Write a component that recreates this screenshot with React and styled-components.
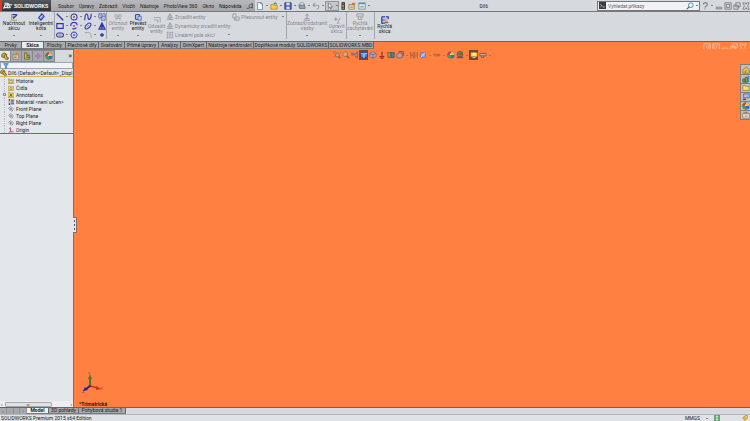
import { useState } from "react";
import styled, { createGlobalStyle, css } from "styled-components";

const GlobalStyle = createGlobalStyle`
  * {
    box-sizing: border-box;
  }

  body {
    margin: 0;
    background: #d6d9de;
    font-family: Roboto, "Open Sans", sans-serif;
    font-size: 5px;
    line-height: 6px;
    color: #1c1e22;
  }

  button,
  input {
    margin: 0;
    padding: 0;
    border: none;
    background: none;
    color: inherit;
    font: inherit;
  }
`;

const C = { blue: "#2a35b0", gray: "#85888d", orange: "#ff8040" };

const ICONS = {
  sketch: (
    <>
      <path d="M2 1v8M1 9h8" stroke="#c89a30" strokeWidth="1.2" />
      <path d="M3 2h5M3 5h3M4 7l5-5" stroke={C.blue} strokeWidth="1.5" />
    </>
  ),
  dimension: (
    <>
      <path d="M2 6l4-5 3 3-4 5z" fill="#7d9ae0" stroke={C.blue} strokeWidth="1.3" />
      <path d="M4 6l3-3" stroke="#fff" />
    </>
  ),
  line: <path d="M1 1l8 8" stroke={C.blue} strokeWidth="1.7" />,
  circle: (
    <>
      <circle cx="5" cy="5" r="3.8" stroke={C.blue} strokeWidth="1.3" />
      <circle cx="5" cy="5" r="1.3" fill="#c04860" />
    </>
  ),
  spline: <path d="M1 9c0-10 4-9 4-4s4 4 4-4" stroke={C.blue} strokeWidth="1.4" />,
  hatch: (
    <>
      <path d="M1 1h4v5H1zM4 4h5v5H4zM6 1h3v3" stroke="#5963bd" strokeWidth="1.1" />
      <path d="M1 8l2-2M2 2l6 6" stroke="#8a91cc" />
    </>
  ),
  rect: (
    <>
      <path d="M1 2h8v6H1z" stroke={C.blue} strokeWidth="1.4" />
      <path d="M1 8h1" stroke="#d04040" strokeWidth="2" />
    </>
  ),
  arc: (
    <>
      <path d="M1 5a4 4 0 018-1M8 7a4 4 0 01-5 1" stroke={C.blue} strokeWidth="1.4" />
      <circle cx="5" cy="5" r="1.3" fill="#c04860" />
    </>
  ),
  ellipse: (
    <>
      <ellipse cx="5" cy="5" rx="4.5" ry="2.4" transform="rotate(-45 5 5)" stroke={C.blue} strokeWidth="1.3" />
      <path d="M4 6l2-2" stroke="#c04860" />
    </>
  ),
  text: <path d="M5 1L1 9h8zM5 3v6M3 6h4" stroke={C.blue} strokeWidth="1.3" fill="#8a91cc" />,
  slot: (
    <>
      <rect x="0.7" y="2.5" width="8.6" height="5" rx="2.5" stroke={C.blue} strokeWidth="1.3" />
      <path d="M3 5h4" stroke="#c04860" />
    </>
  ),
  polygon: (
    <>
      <path d="M3 1.5h4L9 5 7 8.5H3L1 5z" stroke={C.blue} strokeWidth="1.2" />
      <circle cx="5" cy="5" r="1.2" fill="#5963bd" />
    </>
  ),
  fillet: <path d="M1 2h4c3 0 4 2 4 4v3" stroke="#a0a3b0" strokeWidth="1.2" />,
  point: <path d="M5 2.5v5M2.5 5h5" stroke={C.blue} strokeWidth="1.6" />,
  trim: <path d="M1 2h3v3H1zM6 2h3v3H6zM2 9l5-7M8 9L3 2M1 7h8" stroke="#a6a9ae" />,
  convert: (
    <>
      <path d="M2 2h5v6H2z" fill="#c9d2ef" stroke={C.blue} strokeWidth="1.2" />
      <path d="M5 4h4v5H5z" fill="#c9d2ef" stroke="#4a55b5" />
    </>
  ),
  offset: <path d="M1 2h8v6M1 5h5v4" stroke="#a3a6ab" strokeWidth="1.2" />,
  mirror: <path d="M5 1L2 6h6zM1 8h8M5 1v8" stroke="#999ca1" strokeWidth="1.1" />,
  pattern: <path d="M1 2h8M1 5h8M1 8h8" stroke="#999ca1" strokeWidth="2" strokeDasharray="2 1" />,
  move: <path d="M1 1h4v5H1zM5 5h4v4H5zM3 6v3h2" stroke="#999ca1" strokeWidth="1.1" />,
  relations: <path d="M1 9h8M5 7V3M2 7h6M3 4l2-3 2 3" stroke="#999ca1" strokeWidth="1.2" />,
  repair: <path d="M1 4h5M3.5 1.5v5M6 8l3-6M5 9h3" stroke="#999ca1" strokeWidth="1.1" />,
  snaps: <path d="M1 1h8v3H1zM3 4v4h5M5 6h4" stroke="#999ca1" strokeWidth="1.1" />,
  rapid: (
    <>
      <path d="M1 1h4M1 1v8h4M1 5h4M6 1h3v3" stroke={C.blue} strokeWidth="1.5" />
      <path d="M5 3h3v3H5z" fill="#e8b43a" />
      <path d="M5 7h4v2H5z" fill="#a4553c" />
    </>
  ),
  pin: <path d="M1 8h3M4 4l4-2v5H4zM8 2v6" stroke="#55585d" strokeWidth="1.2" />,
  newDoc: <path d="M2 .5h4l2 2v7H2zM6 .5v2h2" fill="#fff" stroke="#68778f" />,
  open: (
    <>
      <path d="M1 3h3l1 1h4v5H1z" fill="#f3cd4b" stroke="#b38a26" />
      <path d="M5 3c1-3 3-2 3 0" stroke="#3d8a40" strokeWidth="1.3" />
    </>
  ),
  save: (
    <>
      <path d="M1 1h8v8H1z" fill="#4d64bd" stroke="#29377f" />
      <path d="M3 1h4v3H3zM3 6h4v3H3z" fill="#dfe5f4" />
    </>
  ),
  print: (
    <>
      <path d="M3 1h4l1 3H2z" fill="#fff" stroke="#7a7d84" />
      <path d="M1 4h7l1 4H2z" fill="#9aa4b8" stroke="#5f6a80" />
    </>
  ),
  undo: <path d="M1 4l3-3M1 4l3 2M1 4h5c4 0 3 4 0 5" stroke="#9a9da3" strokeWidth="1.3" />,
  cursor: <path d="M3 1v7l2-2 1 3 1-1-1-2h2z" fill="#f7f7f7" stroke="#585b60" strokeWidth=".8" />,
  traffic: (
    <>
      <rect x="3" y="0" width="4.5" height="10" rx="1" fill="#46443f" />
      <circle cx="5.2" cy="2" r="1.2" fill="#e04434" />
      <circle cx="5.2" cy="5" r="1.1" fill="#c7a13c" />
      <circle cx="5.2" cy="8" r="1.2" fill="#47b24c" />
    </>
  ),
  props: (
    <>
      <path d="M1 3h7v6H1z" fill="#f4ead2" stroke="#97793c" />
      <path d="M5 1h4v3H5z" fill="#d2783c" />
      <path d="M2 5h5M2 7h5" stroke="#8a8d93" />
    </>
  ),
  panel: (
    <>
      <path d="M1 1h8v8H1z" fill="#dbe6ea" stroke="#718a96" />
      <path d="M1 2h8" stroke="#5d8fa5" strokeWidth="1.5" />
      <path d="M3 6h4" stroke="#7fa56e" strokeWidth="1.5" />
    </>
  ),
  search: (
    <>
      <circle cx="6" cy="4" r="3" fill="#e5f2fa" stroke="#5c94bc" strokeWidth="1.2" />
      <path d="M4 6L1 9" stroke="#6a5a4d" strokeWidth="1.5" />
    </>
  ),
  prompt: (
    <>
      <path d="M0 0h10v10H0z" fill="#383a40" />
      <path d="M2 3l2 2-2 2M5 7h3" stroke="#fff" />
    </>
  ),
  help: <path d="M3 3c0-3 5-3 5 0 0 2-3 2-3 4M5 8v1.5" stroke="#7c7f85" strokeWidth="1.4" />,
  minimize: <path d="M1.5 6.5h7v2h-7z" stroke="currentColor" strokeWidth="1.1" />,
  maximize: <path d="M1 1h8v8H1zM3 3h4v4H3z" stroke="currentColor" strokeWidth="1.1" />,
  restore: <path d="M3.5 1h5.5v5H3.5zM1 4h5.5v5H1z" stroke="currentColor" strokeWidth="1.1" />,
  close: <path d="M1 1h3l1 2 1-2h3L7 5l2 4H6L5 7 4 9H1l2-4z" stroke="currentColor" />,
  dockLeft: <path d="M1 1h8v8H1zM6 3L4 5l2 2M7.5 3v4" stroke="currentColor" strokeWidth="1.1" />,
  dockRight: <path d="M1 1h8v8H1zM4 3l2 2-2 2M2.5 3v4" stroke="currentColor" strokeWidth="1.1" />,
  part: (
    <>
      <path d="M1 3l3-2 3 2v3l2 1v2L6 9 4 7 1 6z" fill="#e4b62e" stroke="#665420" strokeWidth="1.1" />
      <path d="M4 4l3-1M4 4v3" stroke="#665420" />
    </>
  ),
  property: (
    <>
      <path d="M1 3h7v6H1z" fill="#e8e0c8" stroke="#8b7a55" />
      <path d="M5 1h4v3H5z" fill="#d28646" />
      <path d="M2 5h4M2 7h4" stroke="#67696f" />
    </>
  ),
  config: (
    <>
      <path d="M2 1h3v3h3v5H2z" fill="#d4c152" stroke="#615d38" />
      <path d="M4 5h4M4 7h4" stroke="#615d38" />
    </>
  ),
  target: <path d="M5 .5v9M.5 5h9M5 2.5L7.5 5 5 7.5 2.5 5z" fill="#d5a0db" stroke="#a568b0" />,
  ball: (
    <>
      <circle cx="5" cy="5" r="4.5" fill="#3c66c8" />
      <path d="M5 5V.5A4.5 4.5 0 019.5 5z" fill="#e5c332" />
      <path d="M5 5H.5A4.5 4.5 0 015 .5z" fill="#d43b35" />
      <path d="M5 5v4.5A4.5 4.5 0 01.5 5z" fill="#45a14c" />
      <circle cx="4.5" cy="4" r="1" fill="#fff" />
    </>
  ),
  filter: <path d="M1 1h8L6 5v4H4V5z" fill="#6fa6df" stroke="#3970ad" />,
  folder: (
    <>
      <path d="M0 2h4l1 1h5v6H0z" fill="#efd46a" stroke="#9c8740" />
      <path d="M3 4h4v4H3z" fill="#fff" stroke="#5c7850" />
    </>
  ),
  sensor: (
    <>
      <path d="M0 2h4l1 1h5v6H0z" fill="#efd46a" stroke="#9c8740" />
      <circle cx="5" cy="6" r="1.8" fill="#f8eeba" stroke="#8a6c28" />
    </>
  ),
  annotation: (
    <>
      <path d="M0 1h4l1 1h5v7H0z" fill="#f6de55" stroke="#9c8740" />
      <path d="M3 8l2-5 2 5M4 6h2" stroke="#4b471f" strokeWidth="1.2" />
    </>
  ),
  material: (
    <>
      <path d="M1 0h3v3H1z" fill="#c5342d" />
      <path d="M1 4h3v2H1z" fill="#3f9a46" />
      <path d="M1 7h3v3H1z" fill="#3450b0" />
      <path d="M5 2h5M5 5h5M5 8h5" stroke="#33363c" strokeWidth="1.5" />
    </>
  ),
  plane: <path d="M1 4l4-3 4 4-3 4zM2 2l6 6M3 7l4-4" stroke="#71757c" />,
  origin: (
    <>
      <path d="M4 1v7h5" stroke="#b93a3a" strokeWidth="1.4" />
      <path d="M4 1l-2 2M4 8l-3 1" stroke="#4b4e95" />
    </>
  ),
  zoomFit: (
    <>
      <path d="M1 1h3M1 1v3M9 1v2M1 7h2" stroke="#a8745f" strokeWidth="1.2" />
      <circle cx="5.5" cy="5" r="2.5" fill="#d79a7e" stroke="#8f6656" />
      <path d="M7 7l2 2" stroke="#735447" strokeWidth="1.6" />
    </>
  ),
  zoomArea: (
    <>
      <circle cx="4" cy="4" r="3" fill="#dba68c" stroke="#946a5d" />
      <path d="M6 6l3 3" stroke="#735447" strokeWidth="1.5" />
    </>
  ),
  previous: <path d="M1 2l3 3 4-4v8M1 2v3h3M5 6l3 3" stroke="#7b6d78" strokeWidth="1.4" />,
  section: (
    <>
      <path d="M1 3l5-2 3 2v4L5 9 1 8z" fill="#4a91e8" stroke="#173f91" />
      <path d="M1 3l4 1 4-1M5 4v5" stroke="#b8dcff" />
    </>
  ),
  cube: (
    <>
      <path d="M1 3l4-2 4 2v4L5 9 1 7z" fill="#b3a7b8" stroke="#786d88" />
      <path d="M1 3l4 2 4-2M5 5v4" stroke="#655d7b" />
    </>
  ),
  styleCube: (
    <>
      <path d="M1 4l4-2 3 2v4L4 9 1 8z" fill="#bb9c96" stroke="#7a5d63" />
      <path d="M3 1h6v5" stroke="#a63c30" strokeWidth="1.4" />
    </>
  ),
  appearance: (
    <>
      <path d="M2 2h6v6H2z" fill="#9cacdb" stroke="#6a6f9e" />
      <path d="M2 8l6-6" stroke="#e5ddea" />
    </>
  ),
  normal: <path d="M5 1v6M2 7h6M3 9h4" stroke="#a62c26" strokeWidth="1.5" />,
  display: (
    <>
      <path d="M1 2h4v6H1z" fill="#8a9d5c" stroke="#665d3a" />
      <path d="M5 2h4v6H5z" fill="#577aa8" stroke="#444d68" />
    </>
  ),
  hide: <path d="M1 1v8M4 1v8M6 1v8M9 1v8M1 5h3" stroke="#ae5c3c" strokeWidth="1.2" />,
  glasses: <path d="M1 6c1-3 3-3 4 0 1-3 3-3 4 0M1 6h2M6 6h2" stroke="#a5694e" strokeWidth="1.4" />,
  scene: (
    <>
      <circle cx="5" cy="4" r="3.5" fill="#62924d" stroke="#5d5938" />
      <path d="M1 8h8" stroke="#72564d" strokeWidth="2" />
      <path d="M4 2h3v3H4z" fill="#b4464a" />
    </>
  ),
  lamp: (
    <>
      <path d="M1 2h8v5H1z" fill="#efd12f" />
      <circle cx="5" cy="4" r="2" fill="#fff58c" />
      <path d="M3 8h4" stroke="#c6b89a" strokeWidth="1.5" />
    </>
  ),
  camera: <path d="M1 3h8v3H1zM3 6v2h3V6" fill="#c9a991" stroke="#6b554c" />,
  home: <path d="M1 5l4-4 4 4v4H1zM4 9V6h2" fill="#e9c34d" stroke="#947338" />,
  library: (
    <>
      <path d="M1 5h3v4H1zM4 3h3v6H4z" fill="#6aa564" stroke="#35673c" />
      <path d="M7 1h2v8H7z" fill="#5c80b8" />
    </>
  ),
  explorer: <path d="M1 2h3l1 1h4v5H1z" fill="#f3dc79" stroke="#a28739" />,
  palette: (
    <>
      <path d="M2 1h7v5H2z" fill="#aebbd6" stroke="#54658f" />
      <path d="M1 7h4v2H1z" fill="#3454a8" />
    </>
  ),
  form: (
    <>
      <path d="M1 3h8v6H1z" fill="#eee9df" stroke="#807564" />
      <path d="M2 1h5v2H2z" fill="#a3866b" />
      <path d="M3 5h4M3 7h4" stroke="#9b9389" />
    </>
  ),
  unit: (
    <>
      <path d="M1 0h8v10H1z" fill="#68a875" stroke="#417650" />
      <path d="M5 2v6M3 2h4M3 8h4" stroke="#fff" strokeWidth="1.3" />
    </>
  ),
  tag: (
    <>
      <path d="M1 5l4-4h4v4L5 9z" fill="#e8b52c" stroke="#a77e28" />
      <circle cx="7" cy="3" r="1" fill="#fff" />
    </>
  ),
};

const Icon = ({ name, size = 8 }) => (
  <Svg $size={size} viewBox="0 0 10 10" fill="none" aria-hidden="true">
    {ICONS[name]}
  </Svg>
);

const IconButton = ({ name, label, menu, ...rest }) => (
  <Tool type="button" aria-label={label} $menu={menu} {...rest}>
    <Icon name={name} />
    {menu && <Arrow />}
  </Tool>
);

const Command = ({ icon, width, lines, menu, disabled, low }) => (
  <CommandButton type="button" disabled={disabled} $width={width} $low={low}>
    <Icon name={icon} />
    <span>
      {lines[0]}
      <br />
      {lines[1]}
    </span>
    {menu && <Arrow />}
  </CommandButton>
);

const menus = ["Soubor", "Úpravy", "Zobrazit", "Vložit", "Nástroje", "PhotoView 360", "Okno", "Nápověda"];

const quickTools = [
  { name: "newDoc", label: "Nový", menu: true },
  { name: "open", label: "Otevřít", menu: true },
  { name: "save", label: "Uložit", menu: true },
  { name: "print", label: "Tisk", menu: true },
  { name: "undo", label: "Zpět", menu: true },
  { name: "cursor", label: "Vybrat", menu: true, $pressed: true },
  { name: "traffic", label: "Znovu sestavit" },
  { name: "props", label: "Vlastnosti souboru" },
  { name: "panel", label: "Možnosti", menu: true },
];

const sketchTools = [
  ["line", true], ["circle", true], ["spline", true], ["hatch", false],
  ["rect", true], ["arc", true], ["ellipse", true], ["text", false],
  ["slot", true], ["polygon", false], ["fillet", true], ["point", false],
];

const tabs = [
  ["Prvky", 22],
  ["Skica", 22],
  ["Plochy", 22],
  ["Plechové díly", 33],
  ["Svařování", 26],
  ["Přímé úpravy", 34],
  ["Analýzy", 22],
  ["DimXpert", 26],
  ["Nástroje rendrování", 47],
  ["Doplňkové moduly SOLIDWORKS", 75],
  ["SOLIDWORKS MBD", 45],
];

const tree = [
  ["folder", "Historie"],
  ["sensor", "Čidla"],
  ["annotation", "Annotations"],
  ["material", "Materiál <není určen>"],
  ["plane", "Front Plane"],
  ["plane", "Top Plane"],
  ["plane", "Right Plane"],
  ["origin", "Origin"],
];

const viewTools = [
  ["zoomFit"], ["zoomArea"], ["previous"], ["section", false, true], ["cube"],
  ["normal"], ["display"], ["styleCube", true], ["hide"], ["appearance", true],
  ["glasses", true], ["ball"], ["scene", true], ["lamp", false, true], ["camera", true],
];

const App = () => {
  const [activeTab, setActiveTab] = useState("Skica");
  const [sheet, setSheet] = useState("Model");

  return (
    <Page>
      <GlobalStyle />
      <TitleBar>
        <Brand>
          <Logo viewBox="0 0 14 10" fill="none" aria-hidden="true">
            <path d="M3 2h4c2 0 1 2-1 2M2 9l2-5c4 0 4 4-1 4M13 4H9c-2 2 3 2 1 4H6" stroke="#fff" strokeWidth="1.3" />
          </Logo>
          SOLIDWORKS
        </Brand>
        <Menu>
          {menus.map((item) => (
            <button type="button" key={item}>{item}</button>
          ))}
          <IconButton name="pin" label="Připnout" />
        </Menu>
        <QuickTools>
          {quickTools.map((tool) => (
            <IconButton key={tool.name} {...tool} />
          ))}
        </QuickTools>
        <DocumentName>Díl6</DocumentName>
        <Search>
          <Icon name="prompt" size={7} />
          <input type="search" aria-label="Vyhledat příkazy" placeholder="Vyhledat příkazy" />
          <IconButton name="search" label="Vyhledat" menu />
        </Search>
        <WindowButtons>
          <IconButton name="help" label="Nápověda" menu />
          <IconButton name="minimize" label="Minimalizovat" />
          <IconButton name="maximize" label="Maximalizovat" />
          <IconButton name="restore" label="Obnovit" />
          <IconButton name="close" label="Zavřít" />
        </WindowButtons>
      </TitleBar>

      <Ribbon>
        <Group>
          <Command icon="sketch" width={28} lines={["Načrtnout", "skicu"]} menu />
          <Command icon="dimension" width={26} lines={["Inteligentní", "kóta"]} menu />
        </Group>
        <SketchGrid>
          {sketchTools.map(([name, menu]) => (
            <IconButton key={name} name={name} label={name} menu={menu} />
          ))}
        </SketchGrid>
        <Group>
          <Command icon="trim" width={22} lines={["Oříznout", "entity"]} menu disabled />
          <Command icon="convert" width={18} lines={["Převést", "entity"]} menu />
          <Command icon="offset" width={19} lines={["Odsadit", "entity"]} disabled low />
          <Stack>
            <RowButton type="button" disabled><Icon name="mirror" />Zrcadlit entity</RowButton>
            <RowButton type="button" disabled><Icon name="mirror" />Dynamicky zrcadlit entity</RowButton>
            <RowButton type="button" disabled $spread><Icon name="pattern" /><span>Lineární pole skici</span><Arrow /></RowButton>
          </Stack>
          <Stack>
            <RowButton type="button" disabled><Icon name="move" /><span>Přesunout entity</span><Arrow /></RowButton>
          </Stack>
        </Group>
        <Group>
          <Command icon="relations" width={41} lines={["Zobrazit/odstranit", "vazby"]} menu disabled />
          <Command icon="repair" width={18} lines={["Opravit", "skicu"]} disabled low />
        </Group>
        <Group>
          <Command icon="snaps" width={27} lines={["Rychlá", "zachytávání"]} menu disabled />
        </Group>
        <Command icon="rapid" width={20} lines={["Rychlá", "skica"]} low />
      </Ribbon>

      <TabRow>
        <TabList role="tablist">
          {tabs.map(([name, width]) => (
            <Tab
              type="button"
              role="tab"
              key={name}
              aria-selected={name === activeTab}
              $active={name === activeTab}
              $width={width}
              onClick={() => setActiveTab(name)}
            >
              {name}
            </Tab>
          ))}
        </TabList>
        <ViewportButtons>
          <IconButton name="dockLeft" label="Ukotvit vlevo" />
          <IconButton name="dockRight" label="Ukotvit vpravo" />
          <IconButton name="minimize" label="Minimalizovat okno" />
          <IconButton name="restore" label="Obnovit okno" />
          <IconButton name="close" label="Zavřít okno" />
        </ViewportButtons>
      </TabRow>

      <Workspace>
        <Sidebar>
          <ManagerTabs>
            {["part", "property", "config", "target", "ball"].map((name, index) => (
              <ManagerTab type="button" key={name} aria-label={name} $active={index === 0}>
                <Icon name={name} />
              </ManagerTab>
            ))}
            <More type="button">»</More>
          </ManagerTabs>
          <Filter>
            <Icon name="filter" size={6} />
            <input type="text" aria-label="Filtr" />
          </Filter>
          <TreeRoot>
            <Icon name="part" size={7} />
            <span>Díl6 (Default&lt;&lt;Default&gt;_Displ</span>
          </TreeRoot>
          <Tree>
            {tree.map(([icon, label]) => (
              <TreeItem key={label}>
                <Branch>{label === "Annotations" && <Expander />}</Branch>
                <Icon name={icon} size={6} />
                <span>{label}</span>
              </TreeItem>
            ))}
          </Tree>
          <ScrollBar>
            <span>‹</span>
            <Thumb>ııı</Thumb>
            <span>›</span>
          </ScrollBar>
        </Sidebar>

        <Viewport>
          <Splitter type="button" aria-label="Sbalit panel">
            <i />
            <i />
            <i />
          </Splitter>
          <ViewBar>
            {viewTools.map(([name, menu, pressed]) => (
              <IconButton key={name} name={name} label={name} menu={menu} $dark={pressed} />
            ))}
          </ViewBar>
          <TaskPane>
            {["home", "library", "explorer", "palette", "ball", "form"].map((name) => (
              <TaskButton type="button" key={name} aria-label={name}>
                <Icon name={name} />
              </TaskButton>
            ))}
          </TaskPane>
          <Orientation>
            <Triad viewBox="0 0 26 26" fill="none">
              <path d="M11 15V6" stroke="#56752b" strokeWidth="2" />
              <path d="M11 3l-2 5h4z" fill="#56752b" />
              <path d="M11 15l8 2" stroke="#c92e23" strokeWidth="1.5" />
              <path d="M22 18l-5-3v4z" fill="#c92e23" />
              <path d="M11 15l-4 3" stroke="#24268f" strokeWidth="2" />
              <path d="M4 20l2-4 3 3z" fill="#24268f" />
              <circle cx="11" cy="15" r="1" fill="#4b251c" />
              <text x="9" y="4" fill="#56752b">Y</text>
              <text x="21" y="19" fill="#c92e23">X</text>
              <text x="3" y="22" fill="#24268f">Z</text>
            </Triad>
            <strong>*Trimetrická</strong>
          </Orientation>
        </Viewport>
      </Workspace>

      <SheetBar>
        <SheetNav>
          {["«", "‹", "›", "»"].map((mark) => (
            <button type="button" key={mark}>{mark}</button>
          ))}
        </SheetNav>
        {[["Model", 22], ["3D pohledy", 30], ["Pohybová studie 1", 47]].map(([name, width]) => (
          <SheetTab type="button" key={name} $active={sheet === name} $width={width} onClick={() => setSheet(name)}>
            {name}
          </SheetTab>
        ))}
      </SheetBar>
      <StatusBar>
        <span>SOLIDWORKS Premium 2015 x64 Edition</span>
        <StatusTools>
          <Units type="button">MMGS <Arrow /></Units>
          <Icon name="unit" size={6} />
          <Icon name="tag" size={6} />
        </StatusTools>
      </StatusBar>
    </Page>
  );
};

export default App;

const Page = styled.div`
  display: flex;
  flex-direction: column;
  height: 100vh;
  min-width: 700px;
  overflow: hidden;
  white-space: nowrap;
`;

const Svg = styled.svg`
  display: block;
  flex: none;
  width: ${(props) => props.$size}px;
  height: ${(props) => props.$size}px;
`;

const Arrow = styled.i`
  flex: none;
  width: 2px;
  height: 1px;
  background: #7d8086;
`;

const Tool = styled.button`
  display: flex;
  align-items: center;
  justify-content: center;
  gap: 2px;
  flex: none;
  height: 10px;
  width: ${(props) => (props.$menu ? 14 : 9)}px;
  ${(props) =>
    props.$pressed &&
    css`
      background: #c2c5ca;
      outline: 1px solid #92959b;
      outline-offset: -1px;
    `}
  ${(props) =>
    props.$dark &&
    css`
      background: #6f4a3c;
    `}
`;

const TitleBar = styled.header`
  display: flex;
  align-items: center;
  flex: none;
  height: 12px;
  background: #d6d9de;
  border-bottom: 1px solid #77797d;
`;

const Brand = styled.div`
  display: flex;
  align-items: center;
  gap: 1px;
  width: 51px;
  height: 11px;
  border-left: 2px solid #d83a24;
  background: linear-gradient(#55585c, #2f3236);
  color: #ffffff;
  font-family: "Liberation Sans", Arial, sans-serif;
  font-size: 5px;
  font-weight: 700;
`;

const Logo = styled.svg`
  width: 11px;
  height: 9px;
`;

const Menu = styled.nav`
  display: flex;
  align-items: center;
  gap: 5px;
  height: 11px;
  padding-left: 7px;
  background: linear-gradient(#b6b8bb, #a3a5a8);

  ${Tool} {
    margin-left: -1px;
  }
`;

const QuickTools = styled.div`
  display: flex;
  align-items: center;
`;

const DocumentName = styled.div`
  flex: 1;
  text-align: center;
`;

const Search = styled.div`
  display: flex;
  align-items: center;
  gap: 2px;
  width: 103px;
  height: 10px;
  padding: 0 0 0 1px;
  border: 1px solid #74777c;
  background: #f0f2f4;

  input {
    flex: 1;
    min-width: 0;
    outline: none;
  }

  input::placeholder {
    color: #5d6065;
    opacity: 1;
  }
`;

const WindowButtons = styled.div`
  display: flex;
  align-items: center;
  color: #777a80;
`;

const Ribbon = styled.div`
  display: flex;
  flex: none;
  height: 30px;
  background: #d6d9de;
  border-bottom: 1px solid #64676b;
`;

const Group = styled.div`
  display: flex;
  height: 27px;
  border-right: 1px solid #a3a6aa;
`;

const CommandButton = styled.button`
  display: flex;
  flex-direction: column;
  align-items: center;
  width: ${(props) => props.$width}px;
  height: 27px;
  padding-top: ${(props) => (props.$low ? 4 : 1)}px;
  line-height: 5px;
  text-align: center;
  color: ${(props) => (props.disabled ? C.gray : "inherit")};

  ${Arrow} {
    margin-top: 4px;
  }
`;

const SketchGrid = styled.div`
  display: grid;
  grid-template-columns: 14px 14px 14px 8px;
  grid-template-rows: repeat(3, 9px);
  align-items: center;
  height: 27px;
  padding-left: 1px;
  border-right: 1px solid #a3a6aa;

  ${Tool} {
    height: 9px;
    justify-content: flex-start;
  }
`;

const Stack = styled.div`
  display: flex;
  flex-direction: column;
  padding-right: 2px;
`;

const RowButton = styled.button`
  display: flex;
  align-items: center;
  gap: 1px;
  height: 9px;
  color: ${C.gray};

  span {
    flex: ${(props) => (props.$spread ? 1 : "none")};
    padding-right: 3px;
    text-align: left;
  }
`;

const TabRow = styled.div`
  display: flex;
  justify-content: space-between;
  flex: none;
  height: 7px;
  background: ${C.orange};
`;

const TabList = styled.div`
  display: flex;
  background: #a7a9ad;
`;

const Tab = styled.button`
  width: ${(props) => props.$width}px;
  height: 7px;
  border-right: 1px solid #626569;
  border-bottom: 1px solid #77797d;
  background: ${(props) => (props.$active ? "#e8ebef" : "#a7a9ad")};
  font-weight: ${(props) => (props.$active ? 700 : 400)};
  text-align: center;
`;

const ViewportButtons = styled.div`
  display: flex;
  padding-right: 3px;
  color: #f7c1a4;
`;

const Workspace = styled.div`
  display: flex;
  flex: 1;
  min-height: 0;
`;

const Sidebar = styled.aside`
  display: flex;
  flex-direction: column;
  flex: none;
  width: 74px;
  border-top: 1px solid #77797d;
  border-right: 1px solid #77716f;
  background: #e3e7ec;
`;

const ManagerTabs = styled.div`
  display: flex;
  flex: none;
  height: 12px;
  background: #d6d9de;
`;

const ManagerTab = styled.button`
  display: flex;
  align-items: center;
  justify-content: center;
  width: 11px;
  height: 12px;
  border: 1px solid #85888d;
  border-left-width: 0;
  background: ${(props) => (props.$active ? "#e3e7ec" : "#a7a9ad")};
`;

const More = styled.button`
  margin-left: auto;
  padding-right: 1px;
  font-size: 8px;
`;

const Filter = styled.label`
  display: flex;
  align-items: center;
  flex: none;
  height: 7px;
  padding-left: 2px;
  border: 1px solid #9da5b2;
  background: #f0f3f6;

  input {
    flex: 1;
    min-width: 0;
    height: 5px;
    outline: none;
  }
`;

const TreeRoot = styled.div`
  display: flex;
  align-items: center;
  gap: 1px;
  flex: none;
  height: 8px;
  border-bottom: 1px solid #d5b75f;
`;

const Tree = styled.ul`
  margin: 0;
  padding: 0;
  list-style: none;
  border-bottom: 1px solid #2f7fc8;
`;

const TreeItem = styled.li`
  display: flex;
  align-items: center;
  height: 7px;

  span {
    padding-left: 2px;
  }
`;

const Branch = styled.div`
  display: flex;
  align-items: center;
  width: 4px;
  height: 7px;
  margin: 0 0 0 4px;
  border-left: 1px dotted #b5b9be;
`;

const Expander = styled.i`
  width: 3px;
  height: 3px;
  margin-left: -2px;
  border: 1px solid #8d9197;
`;

const ScrollBar = styled.div`
  display: flex;
  align-items: center;
  gap: 2px;
  height: 6px;
  margin-top: auto;
  padding: 0 1px;
  background: #eceef1;

  span:last-child {
    margin-left: auto;
  }
`;

const Thumb = styled.div`
  width: 47px;
  height: 5px;
  border: 1px solid #a5a8ad;
  border-radius: 1px;
  background: #dfe1e5;
  font-size: 4px;
  line-height: 3px;
  text-align: center;
`;

const Viewport = styled.main`
  position: relative;
  flex: 1;
  min-width: 0;
  background: ${C.orange};
`;

const Splitter = styled.button`
  position: absolute;
  top: 47%;
  left: -1px;
  display: flex;
  flex-direction: column;
  align-items: center;
  justify-content: center;
  gap: 2px;
  width: 4px;
  height: 16px;
  border: 1px solid #8b6a5b;
  border-left: none;
  background: #e3e7ec;

  i {
    width: 1px;
    height: 2px;
    background: #4d4f54;
  }
`;

const ViewBar = styled.div`
  position: absolute;
  top: 1px;
  left: 0;
  right: 0;
  display: flex;
  justify-content: center;
`;

const TaskPane = styled.div`
  position: absolute;
  top: 15px;
  right: 0;
  display: flex;
  flex-direction: column;
  border: 1px solid #857a74;
  border-right: none;
  background: #c1bfbd;
`;

const TaskButton = styled.button`
  display: flex;
  align-items: center;
  justify-content: center;
  width: 9px;
  height: 9px;

  & + & {
    border-top: 1px solid #857a74;
  }
`;

const Orientation = styled.div`
  position: absolute;
  bottom: 0;
  left: 5px;
  display: flex;
  flex-direction: column;
  color: #2b1a12;
`;

const Triad = styled.svg`
  width: 26px;
  height: 26px;
  margin-bottom: 4px;
  overflow: visible;
  font-size: 4px;
`;

const SheetBar = styled.div`
  display: flex;
  flex: none;
  height: 7px;
  border-top: 1px solid #64676b;
  background: #d6d9de;
`;

const SheetNav = styled.div`
  display: flex;
  width: 27px;
  background: #a7a9ad;

  button {
    flex: 1;
    border-right: 1px solid #8d9095;
    color: #7c7f84;
  }
`;

const SheetTab = styled.button`
  width: ${(props) => props.$width}px;
  border-right: 1px solid #626569;
  border-bottom: 1px solid #77797d;
  background: ${(props) => (props.$active ? "#f1f3f5" : "#a7a9ad")};
  font-weight: ${(props) => (props.$active ? 700 : 400)};
  text-align: center;
  line-height: 5px;
`;

const StatusBar = styled.footer`
  display: flex;
  align-items: center;
  justify-content: space-between;
  flex: none;
  height: 7px;
  padding: 0 2px 0 1px;
  border-top: 1px solid #b3b6ba;
  background: #dfe2e6;
`;

const StatusTools = styled.div`
  display: flex;
  align-items: center;

  ${Svg}:last-child {
    margin-left: 22px;
  }
`;

const Units = styled.button`
  display: flex;
  align-items: center;
  gap: 6px;
  margin-right: 6px;
`;
